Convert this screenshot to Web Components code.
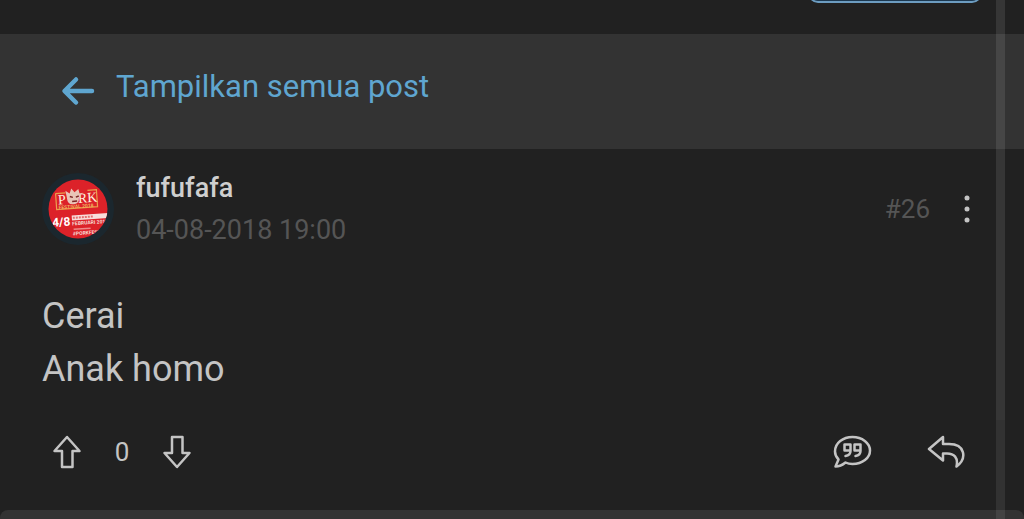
<!DOCTYPE html>
<html lang="id">
<head>
<meta charset="utf-8">
<meta name="viewport" content="width=device-width, initial-scale=1">
<title>Tampilkan semua post</title>
<style>
  body { margin: 0; background: #212121; color: #c4c4c4; font-family: Roboto, "Liberation Sans", sans-serif; overflow: hidden; }
</style>
</head>
<body>
<thread-page>
  <thread-actions slot="top"></thread-actions>
  <back-bar slot="nav" href="#semua">Tampilkan semua post</back-bar>
  <forum-post number="#26" votes="0">
    <user-avatar slot="avatar"></user-avatar>
    <span slot="author">fufufafa</span>
    <time slot="date" datetime="2018-08-04T19:00">04-08-2018 19:00</time>
    <span>Cerai<br>Anak homo</span>
  </forum-post>
</thread-page>
<script>
const define = (name, html, setup) => customElements.define(name, class extends HTMLElement {
  constructor() {
    super();
    this.attachShadow({ mode: 'open' }).innerHTML = html;
  }
  connectedCallback() { if (setup) setup(this, this.shadowRoot); }
});

define('thread-page', `
  <style>
    :host { display: flex; flex-direction: column; min-height: 100vh; position: relative; }
    .next { flex: 1; min-height: 9px; background: #333; border-radius: 8px 8px 0 0; }
    .rail { position: absolute; top: 0; bottom: 0; right: 19px; width: 9px; background: rgba(255,255,255,.08); }
    .thumb { height: 81%; background: rgba(255,255,255,.02); }
  </style>
  <slot name="top"></slot>
  <slot name="nav"></slot>
  <slot></slot>
  <div class="next"></div>
  <div class="rail"><div class="thumb"></div></div>
`);

define('thread-actions', `
  <style>
    :host { display: flex; justify-content: flex-end; align-items: flex-start; height: 34px; padding-right: 42px; overflow: hidden; }
    button { width: 174px; height: 48px; margin: -45px 0 0; padding: 0; border: 2px solid #6c9cc0; border-radius: 10px; background: #1c3850; }
  </style>
  <button type="button" aria-label="Ikuti"></button>
`);

define('back-bar', `
  <style>
    :host { display: block; background: #333; }
    a { display: flex; align-items: center; gap: 20px; padding: 32px 60px 41px; color: #5fa6d0; font-size: 31px; line-height: 42px; text-decoration: none; }
    svg { width: 36px; height: 32px; margin-top: 8px; flex: none; }
  </style>
  <a><svg viewBox="0 0 36 32" fill="none" stroke="currentColor" stroke-width="4.500" stroke-linecap="round" stroke-linejoin="round" aria-hidden="true"><path d="M32 16H5M16 4.500L4.500 16 16 27.500"/></svg><slot></slot></a>
`, (host, root) => { root.querySelector('a').href = host.getAttribute('href'); });

define('user-avatar', `
  <style>
    :host { display: block; width: 72px; height: 74px; }
    svg { display: block; width: 100%; height: 100%; }
    text { font-family: Roboto, sans-serif; fill: #f6d8d2; }
  </style>
  <svg viewBox="1 0 72 74" role="img" aria-label="Foto profil">
    <defs><clipPath id="c"><circle cx="37" cy="37" r="29.500"/></clipPath></defs>
    <circle cx="37" cy="37" r="36" fill="#1b272e"/>
    <g clip-path="url(#c)">
      <rect width="74" height="74" fill="#dc2229"/>
      <g transform="rotate(-4 37 27)">
        <path d="M15 20h10M47 19h9v17H15V20" fill="none" stroke="#eaa24e" stroke-width="1.200"/>
        <text x="17" y="31" font-size="14" style="font-family:'Liberation Serif',serif;fill:#fff0df">P</text>
        <text x="37" y="31" font-size="14" style="font-family:'Liberation Serif',serif;fill:#fff0df">RK</text>
        <path d="M25 18l4 3 2-5 3 4 4-3 1 5 3-1-4 5q0 6-6 6-6 0-6-7z" fill="#e9c4b7"/>
        <path d="M29 24l3 1M35 25l3-1M31 29h5" stroke="#7c2525" stroke-width="1.500"/>
        <text x="17" y="36" font-size="5" font-weight="700" style="fill:#f0b05d">FESTIVAL 2018</text>
      </g>
      <g transform="rotate(-4 37 48)">
        <text x="11" y="53" font-size="12" font-weight="700" style="fill:#fff">4/8</text>
        <rect x="31" y="43" width="38" height="5" fill="#f8dedb"/>
        <path d="M32 45.500h20" stroke="#e4706f" stroke-width="2" stroke-dasharray="2 1"/>
        <text x="31" y="53" font-size="5" font-weight="700">FEBRUARI 2018</text>
        <path d="M32 57h17" stroke="#ed8a88" stroke-width="1.500"/>
        <text x="31" y="63" font-size="5" font-weight="700">#PORKFEST</text>
      </g>
    </g>
  </svg>
`);

define('vote-box', `
  <style>
    :host { display: flex; align-items: center; gap: 30px; color: #c4c4c4; font-size: 26px; line-height: 36px; }
    button { padding: 0; border: 0; background: none; color: inherit; }
    svg { display: block; width: 32px; height: 36px; fill: none; stroke: currentColor; stroke-width: 2.500; stroke-linejoin: round; }
    output { width: 18px; text-align: center; }
  </style>
  <button type="button" aria-label="Suka"><svg viewBox="0 0 32 36"><path d="M16 3L28.500 17H21.500V33H11V17H3.500Z"/></svg></button>
  <output></output>
  <button type="button" aria-label="Tidak suka"><svg viewBox="0 0 32 36"><path d="M16 33L28.500 19H21.500V3H11V19H3.500Z"/></svg></button>
`, (host, root) => { root.querySelector('output').textContent = host.getAttribute('count'); });

define('forum-post', `
  <style>
    :host { display: block; padding: 23px 50px 40px 42px; background: #212121; }
    header { display: flex; align-items: center; gap: 22px; }
    .who { flex: 1; font-size: 27px; line-height: 42px; color: #555; margin: -5px 0; }
    .who div { color: #cfcfcf; font-weight: 500; }
    .num { font-size: 26px; line-height: 36px; color: #555; }
    button { padding: 0; border: 0; background: none; color: #c4c4c4; }
    svg { display: block; fill: none; stroke: currentColor; stroke-width: 2.500; stroke-linecap: round; stroke-linejoin: round; }
    header button { margin-left: 8px; }
    header svg { width: 14px; height: 36px; fill: currentColor; stroke: none; }
    .body { margin-top: 44px; font-size: 36px; line-height: 53px; color: #c4c4c4; }
    footer { display: flex; justify-content: space-between; align-items: center; margin-top: 38px; padding-left: 9px; }
    .tools { display: flex; gap: 54px; padding-right: 8px; }
    .tools svg { width: 40px; height: 36px; }
  </style>
  <header>
    <slot name="avatar"></slot>
    <div class="who"><div><slot name="author"></slot></div><slot name="date"></slot></div>
    <span class="num"></span>
    <button type="button" aria-label="Menu"><svg viewBox="0 0 14 36"><circle cx="7" cy="7" r="2.500"/><circle cx="7" cy="18" r="2.500"/><circle cx="7" cy="29" r="2.500"/></svg></button>
  </header>
  <div class="body"><slot></slot></div>
  <footer>
    <vote-box></vote-box>
    <div class="tools">
      <button type="button" aria-label="Kutip"><svg viewBox="0 0 40 36"><path d="M3.500 32.500L6.500 25.500C4 23 3 20.500 3 17.500C3 9 11 3 20.500 3S38 9 38 16.500S30.500 30 20.500 30C17.500 30 15.500 29.500 13.500 28.500C10.500 31 7 32.500 3.500 32.500Z"/><path d="M18.500 16.500H12.500V10.500H18.500V17C18.500 20 16.500 21.500 13.500 22M28.500 16.500H22.500V10.500H28.500V17C28.500 20 26.500 21.500 23.500 22"/></svg></button>
      <button type="button" aria-label="Balas"><svg viewBox="0 0 40 36"><path d="M17 3L3 15L17 26.500V19.500H21C28 19.500 32.500 23.500 30.500 32.500C41.500 24 39 10 23 10H17Z"/></svg></button>
    </div>
  </footer>
`, (host, root) => {
  root.querySelector('.num').textContent = host.getAttribute('number');
  const box = root.querySelector('vote-box');
  box.shadowRoot.querySelector('output').textContent = host.getAttribute('votes');
  box.setAttribute('count', host.getAttribute('votes'));
});
</script>
</body>
</html>
